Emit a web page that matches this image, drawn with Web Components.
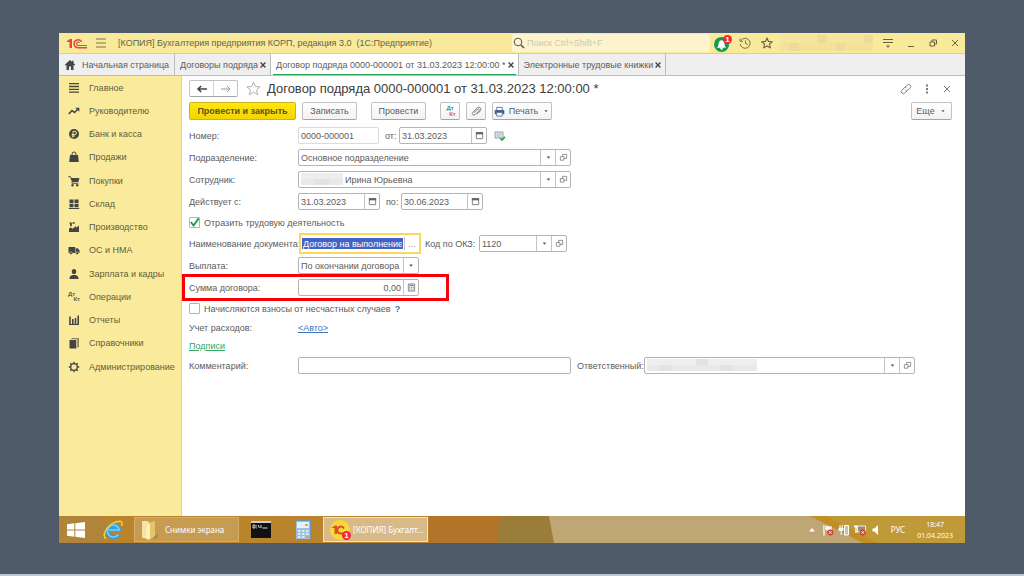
<!DOCTYPE html>
<html lang="ru">
<head>
<meta charset="utf-8">
<meta name="viewport" content="width=device-width, initial-scale=1">
<title>Договор подряда</title>
<style>
  body { margin: 0; background: #505b69; font: 9px/12px "Liberation Sans", Arial, sans-serif; color: #5c5c5c; }
</style>
</head>
<body>
<app-desktop></app-desktop>

<script>
const ICONS = {
  logo: ['0 0 40 22', '<path d="M0 6l6-4h4v18H5V8H0z" fill="#dd4a3e"/><g fill="none" stroke="#dd4a3e"><path d="M29.500 8a8 8 0 1 0-7 11.500H40" stroke-width="3"/><path d="M25.500 9.500a3.500 3.500 0 1 0-3 5.500H40" stroke-width="2.200"/></g>'],
  burger: ['0 0 12 12', '<path d="M1 2h10M1 6h10M1 10h10" stroke="#7b7347" fill="none"/>'],
  search: ['0 0 12 12', '<circle cx="5" cy="5" r="3.800" fill="none" stroke="#555"/><path d="M8 8l3 3" stroke="#555" stroke-width="1.600"/>'],
  bell: ['0 0 18 18', '<circle cx="8" cy="10" r="8" fill="#159a51"/><path d="M3 13.500c2-1.500 1.500-3 2-5 .3-1.600 1.400-3 3-3s2.700 1.400 3 3c.5 2 0 3.500 2 5z" fill="#fff"/><circle cx="8" cy="14.300" r="1.300" fill="#fff"/>'],
  history: ['0 0 12 12', '<path d="M2 3.500a5 5 0 1 1-.8 3.500M1 1.500v2.800h3M6.500 3.500v3l2.500 1" fill="none" stroke="#7b7347"/>'],
  star: ['0 0 16 16', '<path d="M8 1.300l2 4.600 5 .4-3.800 3.300 1.200 4.900L8 11.900l-4.400 2.600 1.200-4.900L1 6.300l5-.4z" fill="none" stroke="currentColor" stroke-width="var(--stroke,1)" stroke-linejoin="round"/>'],
  view: ['0 0 12 12', '<path d="M1 2.500h10M1 5.500h10" stroke="#6b6338"/><path d="M4 8.500h4L6 10.800z" fill="#6b6338"/>'],
  minimize: ['0 0 10 10', '<path d="M2 8.500h6" stroke="#6b6338"/>'],
  restore: ['0 0 10 10', '<path d="M2 4h4.500v4H2zM4 4V2h4.500v4h-2" fill="none" stroke="#6b6338"/>'],
  close: ['0 0 10 10', '<path d="M2 2l6 6M8 2l-6 6" stroke="currentColor" stroke-width="var(--stroke,1)"/>'],
  home: ['0 0 12 12', '<path d="M6 1L0.800 5.700l.8.800L2.500 6v5H5V7.500h2V11h2.500V6l.9.500.8-.8L9.500 4V1.800H8v1z" fill="#444"/>'],
  main: ['0 0 12 12', '<path d="M1 1.700h10M1 4.500h10M1 7.300h10M1 10.200h10" stroke="#4c4836" stroke-width="1.300"/>'],
  trend: ['0 0 12 12', '<path d="M.8 9L4 5.500l2.500 2L10 4" fill="none" stroke="#444" stroke-width="1.600"/><path d="M7.300 2.800h4v4z" fill="#444"/>'],
  ruble: ['0 0 12 12', '<circle cx="6" cy="6" r="5" fill="#444"/><path d="M5 9.500V3.300h1.800a1.600 1.600 0 0 1 0 3.300H3.700M3.700 8h3" fill="none" stroke="#f9eb9a"/>'],
  bag: ['0 0 12 12', '<path d="M2 4h8l.8 7H1.200z" fill="#444"/><path d="M4 5.500V3a2 2 0 0 1 4 0v2.500" fill="none" stroke="#444"/>'],
  cart: ['0 0 12 12', '<path d="M.3 1.700h2.200l.6 1.500" fill="none" stroke="#444"/><path d="M2.500 3h9L10.300 7.300H4z" fill="#444"/><path d="M3.800 7l.5 1.600h6" fill="none" stroke="#444" stroke-width=".8"/><circle cx="4.500" cy="10.200" r="1.200" fill="#444"/><circle cx="9.200" cy="10.200" r="1.200" fill="#444"/>'],
  boxes: ['0 0 12 12', '<path d="M1.500 1.500h4v3.500h-4zM6.500 1.500h4v3.500h-4zM1.500 5.800h4v3.400h-4zM6.500 5.800h4v3.400h-4zM.8 10h10.400v1H.8z" fill="#444"/>'],
  factory: ['0 0 12 12', '<path d="M1 11V7.500l2-1 1.500 1.200L8 5v1.800L11 4.500V11zM1.500 1.500h2.300v3.700H2.300zM4.500 1.200h2.200v1.600H4.500z" fill="#444"/>'],
  truck: ['0 0 12 12', '<path d="M.5 3h6.700v6H.5zM7.700 4.300h2l1.800 2V9H7.700z" fill="#444"/><circle cx="3" cy="9.200" r="1.400" fill="#444" stroke="#f9eb9a" stroke-width=".5"/><circle cx="9.200" cy="9.200" r="1.400" fill="#444" stroke="#f9eb9a" stroke-width=".5"/>'],
  person: ['0 0 12 12', '<ellipse cx="6" cy="3.600" rx="2.200" ry="2.700" fill="#444"/><path d="M1.500 11c0-3 1.500-3.500 3-4h3c1.500.5 3 1 3 4z" fill="#444"/>'],
  chart: ['0 0 12 12', '<path d="M2 2.500v7.500M4.800 5v5M7.500 4v6M10.200 1.500V10" stroke="#444" stroke-width="1.600"/><path d="M1 10.500h10" stroke="#444"/>'],
  books: ['0 0 12 12', '<path d="M1.500 3h6.800v8.500H1.500z" fill="#444"/><path d="M2.500 2.300L4 1h7v8.800L9.300 11V2.300z" fill="#8b835a"/>'],
  gear: ['0 0 12 12', '<circle cx="6" cy="6" r="3.300" fill="none" stroke="#444" stroke-width="1.300"/><path d="M6 .8v2M6 9.200v2M.8 6h2M9.200 6h2M2.300 2.300l1.400 1.400M8.300 8.300l1.400 1.400M9.700 2.300L8.300 3.700M3.700 8.300L2.300 9.700" stroke="#444" stroke-width="1.300"/>'],
  back: ['0 0 12 12', '<path d="M11 6H2M5.200 3L2 6l3.200 3" fill="none" stroke="#444" stroke-width="1.600"/>'],
  forward: ['0 0 12 12', '<path d="M1 6h9M7 3l3 3-3 3" fill="none" stroke="#999"/>'],
  clip: ['0 0 12 12', '<path d="M3.200 7.500l4-4a1 1 0 0 1 1.600 1.600L4.500 9.400a1.700 1.700 0 0 1-2.600-2.500L6.800 2a2.300 2.300 0 0 1 3.400 3.300L6.500 9" fill="none" stroke="#777"/>'],
  printer: ['0 0 12 12', '<path d="M3 1.500h6V5H3z" fill="#fff" stroke="#5a7394"/><path d="M.8 4.500h10.400V9H.8z" fill="#3d5f8c"/><path d="M3 7h6v4H3z" fill="#fff" stroke="#5a7394"/>'],
  link: ['0 0 12 12', '<g fill="none" stroke="#888"><path d="M5 4.200L7.200 2a2 2 0 0 1 2.900 2.900L8 7a2 2 0 0 1-2.500.2"/><path d="M7 7.800L4.800 10a2 2 0 0 1-2.900-2.900L4 5a2 2 0 0 1 2.500-.2"/></g>'],
  dots: ['0 0 10 10', '<path d="M4 .5h2v2H4zM4 4h2v2H4zM4 7.500h2v2H4z" fill="#777"/>'],
  calendar: ['0 0 10 10', '<path d="M1.500 2h7v6.500h-7z" fill="#fff" stroke="#777"/><path d="M1 1.200h8v2.500H1z" fill="#666"/>'],
  calc: ['0 0 10 10', '<path d="M1.500 1h7v8h-7z" fill="#eee" stroke="#888"/><path d="M2.500 2h5v1.500h-5z" fill="#888"/><path d="M3 4.500v4M5 4.500v4M7 4.500v4" stroke="#888" stroke-dasharray="1 .7"/>'],
  arrow: ['0 0 10 10', '<path d="M3 4h4L5 6.500z" fill="#555"/>'],
  open: ['0 0 10 10', '<path d="M1.500 4h4v4h-4zM4 4V1.500h4.500V6h-3" fill="none" stroke="#888"/>'],
  posted: ['0 0 12 12', '<path d="M1 2h8v6H1z" fill="#e7ecf2" stroke="#93a0b2"/><path d="M2.500 4h5M2.500 6h5" stroke="#93a0b2" stroke-width=".7"/><path d="M6 8l2 2 3-3.200" fill="none" stroke="#2fa54f" stroke-width="1.700"/>'],
  check: ['0 0 12 12', '<path d="M2 5.500l3 3.800L10.500 1.500" fill="none" stroke="#179b4a" stroke-width="2"/>'],
  windows: ['0 0 18 16', '<path d="M0 2.300l7.300-1v6.200H0zM8.300 1.200L18 0v7.500H8.300zM0 8.500h7.300v6.200l-7.300-1zM8.300 8.500H18V16l-9.700-1.200z" fill="#fff"/>'],
  ie: ['0 0 20 20', '<path d="M15.300 14.500a6 6 0 1 1 1-4.500H6" fill="none" stroke="#2f9fe6" stroke-width="4"/><path d="M15.300 14.500a6 6 0 1 1 1-4.500H6" fill="none" stroke="#7fd0fb" stroke-width="1.500"/><path d="M3 18.500C-2 16 4 5 13 2c6-2 7 0 5.500 4" fill="none" stroke="#f2cf3c" stroke-width="1.500"/>'],
  folder: ['0 0 18 20', '<path d="M1 1h6l2 3v14H1z" fill="#f7e3a0"/><path d="M6 3l8-2v15l-6 4-4-1z" fill="#e5c56c"/><path d="M6 3l3 1v15.500L4 18z" fill="#fff0bd"/><path d="M12 18l5-4v3l-3 2z" fill="#a98342"/>'],
  terminal: ['0 0 20 17', '<path d="M0 0h20v17H0z" fill="#111"/><path d="M0 0h20v2H0z" fill="#cfcfcf"/><path d="M2 4v3h2V4zM5.500 4.500v.8M5.500 6.500v.8M7 4l1.500 3M10 4v3M11.500 7h5" stroke="#eee" fill="none" stroke-width=".9"/>'],
  calculator: ['0 0 16 20', '<path d="M.5.500h15v19H.5z" fill="#9dc0dd" stroke="#6d92b3"/><path d="M2 2h12v6H2z" fill="#e5f3f8"/><path d="M3 11h2.500M3 14h2.500M3 17h2.500M7 11h2.500M7 14h2.500M7 17h2.500M11 11h2.500M11 14h2.500" stroke="#d9ebf6" stroke-width="1.800"/><path d="M11 16h2.500v2H11z" fill="#e8a33a"/><path d="M10 4h3v2h-3z" fill="#dfa949"/>'],
  onec: ['0 0 20 20', '<circle cx="10" cy="10" r="10" fill="#fbd935"/><path d="M2 7.500L5 5.500h2V14H4.500V8H2z" fill="#d9502f"/><path d="M14 8.500a3.500 3.500 0 1 0-2.500 5H18" fill="none" stroke="#d9502f" stroke-width="2"/>'],
  trayup: ['0 0 12 12', '<path d="M3 7.500h6L6 4z" fill="#fff"/>'],
  flag: ['0 0 12 12', '<path d="M2 1v10.500" stroke="#fff" stroke-width="1.300"/><path d="M3 1.500c3-1 4 1.500 7 .3V7c-3 1-4-.8-7 0z" fill="#f3f3f3" stroke="#8a7a55" stroke-width=".4"/><circle cx="8.300" cy="8.500" r="3" fill="#d43a31"/><path d="M7 7.200l2.600 2.600M9.600 7.200L7 9.800" stroke="#fff"/>'],
  battery: ['0 0 12 12', '<path d="M6.500 1.500h4V11h-4z" fill="#c9c2b3" stroke="#fff"/><path d="M2 1v2.500M4.300 1v2.500M1 4h4v2.500H1zM3.200 7v4" stroke="#fff" fill="#eee"/>'],
  network: ['0 0 12 12', '<path d="M3.500 2h8v6h-8z" fill="#8f8f7b" stroke="#eee"/><path d="M2 1v8M0 2.500h4" stroke="#fff" stroke-width="1.300"/><circle cx="8.800" cy="8.500" r="3" fill="#d43a31"/><path d="M7.500 7.200l2.600 2.600M10.100 7.200L7.500 9.800" stroke="#fff"/>'],
  sound: ['0 0 12 12', '<path d="M2.500 4.500h2L8 1v10L4.500 7.500h-2z" fill="#fff"/>']
};

class Base extends HTMLElement {
  connectedCallback() {
    if (this.shadowRoot) return;
    this.attachShadow({ mode: 'open' }).innerHTML =
      '<style>*{box-sizing:border-box}button,input,select{font:inherit;color:inherit;margin:0;padding:0;border:0;background:none;border-radius:0}' +
      this.css() + '</style>' + this.html();
  }
  attr(name, fallback = '') { return this.getAttribute(name) ?? fallback; }
}

customElements.define('ui-icon', class extends Base {
  css() { return ':host{display:block;flex:none;width:12px;height:12px}svg{display:block;width:100%;height:100%}'; }
  html() {
    const [box, body] = ICONS[this.attr('name')];
    return `<svg viewBox="${box}" aria-hidden="true">${body}</svg>`;
  }
});

customElements.define('count-badge', class extends Base {
  css() { return ':host{display:block;width:9px;height:9px;border-radius:50%;background:#ee2b37;color:#fff;font:bold 8px/9px "Liberation Sans",Arial,sans-serif;text-align:center}'; }
  html() { return '<slot></slot>'; }
});

/* Pixelated patch that hides a personal name. */
customElements.define('masked-text', class extends Base {
  css() {
    return `:host{display:grid;grid-auto-flow:column;grid-auto-columns:1fr;grid-template-rows:repeat(2,1fr);flex:none;width:110px;height:12px}
      i:nth-child(odd){background:var(--mask-a,#e9e9e9)}i:nth-child(even){background:var(--mask-b,#eeeeee)}i:nth-child(5n){background:var(--mask-c,#e2e3e3)}`;
  }
  html() { return '<i></i>'.repeat(Number(this.attr('cells', '18'))); }
});

customElements.define('title-bar', class extends Base {
  css() {
    return `:host{display:flex;align-items:center;height:21px;background:#f9e99b;border-bottom:1px solid #d8cf9f;color:#6a6344}
      .left,.right{display:flex;align-items:center;flex:1;min-width:0}
      .left{gap:8px}.logo{width:20px;height:11px;margin-left:8px}
      .title{margin-left:3px;white-space:pre}
      button{display:block}
      label{display:flex;align-items:center;flex:1;gap:2px;height:18px;background:#fdf3cd;border-radius:2px;padding-left:1px}
      input{flex:1;min-width:0;outline:0}input::placeholder{color:#d0c9aa;opacity:1}
      .bell{position:relative;margin:0 8px 0 4px}.bell ui-icon{width:17px;height:17px}.bell count-badge{position:absolute;right:-1px;top:0}
      .tools{display:flex;align-items:center;gap:10px}
      masked-text{width:93px;height:16px;margin:0 9px 0 7px;--mask-a:#f3e29a;--mask-b:#f6e59c;--mask-c:#ecdc98}
      .window{display:flex;gap:12px;padding-right:5px}.window ui-icon{width:10px;height:10px}
      .window .view ui-icon{width:12px;height:12px}`;
  }
  html() {
    return `<div class="left"><ui-icon class="logo" name="logo"></ui-icon>
      <button aria-label="Меню"><ui-icon name="burger"></ui-icon></button>
      <span class="title">[КОПИЯ] Бухгалтерия предприятия КОРП, редакция 3.0  (1С:Предприятие)</span></div>
      <div class="right"><label><ui-icon name="search"></ui-icon><input type="search" aria-label="Поиск" placeholder="Поиск Ctrl+Shift+F"></label>
      <button class="bell" aria-label="Уведомления"><ui-icon name="bell"></ui-icon><count-badge>1</count-badge></button>
      <div class="tools"><button aria-label="История"><ui-icon name="history"></ui-icon></button><button aria-label="Избранное"><ui-icon name="star" style="--stroke:1.500"></ui-icon></button></div>
      <masked-text cells="20"></masked-text>
      <div class="window"><button class="view" aria-label="Вид"><ui-icon name="view"></ui-icon></button><button aria-label="Свернуть"><ui-icon name="minimize"></ui-icon></button><button aria-label="Восстановить"><ui-icon name="restore"></ui-icon></button><button aria-label="Закрыть"><ui-icon name="close"></ui-icon></button></div></div>`;
  }
});

customElements.define('doc-tab', class extends Base {
  css() {
    return `:host{display:flex;align-items:center;gap:1px;padding:0 3px 0 5px;border-right:1px solid #bdbdbd;height:21px;white-space:nowrap}
      :host([home]){padding:0 5px;gap:6px}
      :host([active]){background:linear-gradient(#26a658,#26a658) 2px 100%/calc(100% - 4px) 1px no-repeat #fff}
      button{display:block;color:#444;--stroke:1.700}button ui-icon{width:8px;height:8px}a{color:inherit;text-decoration:none}`;
  }
  html() {
    return this.hasAttribute('home')
      ? '<ui-icon name="home"></ui-icon><a href="#"><slot></slot></a>'
      : '<a href="#"><slot></slot></a><button aria-label="Закрыть вкладку"><ui-icon name="close"></ui-icon></button>';
  }
});

customElements.define('tab-strip', class extends Base {
  css() { return ':host{display:flex;height:22px;background:#efefef;border-bottom:1px solid #bdbdbd;overflow:hidden}'; }
  html() { return '<slot></slot>'; }
});

customElements.define('side-nav', class extends Base {
  css() {
    return `:host{display:block;width:123px;flex:none;background:#f9eb9b;border-right:1px solid #ddd197}
      ul{list-style:none;margin:0;padding:0;height:302px;display:flex;flex-direction:column;justify-content:space-between}
      a{display:flex;align-items:center;gap:9px;height:23px;padding-left:9px;color:#635d3c;text-decoration:none}
      .dk{display:flex;flex-direction:column;width:12px;font-size:6px;line-height:5px;font-weight:bold}.dk i{font-style:normal}.dk i+i{align-self:flex-end}`;
  }
  html() {
    const items = [['main','Главное'],['trend','Руководителю'],['ruble','Банк и касса'],['bag','Продажи'],['cart','Покупки'],['boxes','Склад'],['factory','Производство'],['truck','ОС и НМА'],['person','Зарплата и кадры'],['dk','Операции'],['chart','Отчеты'],['books','Справочники'],['gear','Администрирование']];
    return '<nav><ul>' + items.map(([i, t]) => `<li><a href="#">${i === 'dk' ? '<span class="dk" aria-hidden="true"><i>Дт</i><i>Кт</i></span>' : `<ui-icon name="${i}"></ui-icon>`}${t}</a></li>`).join('') + '</ul></nav>';
  }
});

customElements.define('tool-button', class extends Base {
  css() {
    return `:host{display:block;flex:none}
      button{display:flex;align-items:center;justify-content:center;gap:4px;width:100%;height:18px;padding:0 4px;border:1px solid #c2c2c2;border-bottom-color:#a5a5a5;border-radius:2px;background:linear-gradient(#fff,#f2f2f2);white-space:nowrap}
      :host([primary]) button{background:linear-gradient(#ffe70f,#f5d400);border-color:#cdb21c;font-weight:bold;color:#5c541c}`;
  }
  html() { return `<button type="button" aria-label="${this.attr('hint', this.textContent.trim())}"><slot></slot></button>`; }
});

/* Labelled box: kind = text | date | combo | list | sum | name */
customElements.define('form-field', class extends Base {
  css() {
    return `:host{display:flex;align-items:center;flex:none}
      label{flex:none;width:var(--label,109px);white-space:nowrap}
      .box{display:flex;align-items:stretch;height:17px;width:var(--box,273px);border:1px solid #b4b4b4;border-radius:2px;background:#fff}
      .box>input,.box>select{flex:1;min-width:0;width:0;padding:0 2px;outline:0;appearance:none}
      .box>button{display:flex;align-items:center;justify-content:center;width:15px;border-left:1px solid #c4c4c4}
      .box ui-icon{width:9px;height:9px}
      .box>ui-icon{width:14px;height:9px;align-self:center}
      .split{width:1px;background:#c4c4c4}
      masked-text{margin:1px 0 0 2px;height:12px;width:var(--mask,42px)}
      masked-text+input{padding-left:0}
      :host([readonly]) .box{border-color:#dcdcdc}
      :host([kind=sum]) input{text-align:right}
      :host([kind=name]) .box{border:0;border-radius:0;outline:2px solid #fbd75b}
      :host([kind=name]) .box>button{color:#999;margin:2px 0}
      :host([kind=name]) input{background:#4462c4;color:#fff;margin:3px 1px 3px 1px;padding:0 1px}`;
  }
  html() {
    const kind = this.attr('kind', 'text'), value = this.attr('value'), mask = this.attr('mask');
    const btn = (icon, hint) => `<button type="button" aria-label="${hint}"><ui-icon name="${icon}"></ui-icon></button>`;
    const tail = {
      text: '', date: btn('calendar', 'Календарь'), sum: btn('calc', 'Калькулятор'),
      combo: btn('arrow', 'Список') + btn('open', 'Открыть'),
      list: '<span class="split"></span><ui-icon name="arrow"></ui-icon>',
      name: '<button type="button" aria-label="Выбрать">...</button>'
    }[kind];
    const control = kind === 'list' ? `<select id="f"><option>${value}</option></select>`
      : `<input id="f" value="${value}"${this.hasAttribute('readonly') ? ' readonly' : ''}>`;
    return `<label for="f">${this.attr('label')}</label><div class="box">${mask ? `<masked-text cells="${mask}"></masked-text>` : ''}${control}${tail}</div>`;
  }
});

customElements.define('check-field', class extends Base {
  css() {
    return `:host{display:flex;align-items:center;height:15px}
      label{display:flex;align-items:center;gap:4px}
      .tick{display:grid;width:11px;height:11px}
      .tick>*{grid-area:1/1}
      input{appearance:none;width:11px;height:11px;border:1px solid #b4b4b4;border-radius:1px;background:#fff}
      ui-icon{width:11px;height:11px;visibility:hidden;pointer-events:none}
      input:checked+ui-icon{visibility:visible}`;
  }
  html() { return `<label><span class="tick"><input type="checkbox"${this.hasAttribute('checked') ? ' checked' : ''}><ui-icon name="check"></ui-icon></span><slot></slot></label><slot name="after"></slot>`; }
});

customElements.define('contract-form', class extends Base {
  css() {
    return `:host{display:block;flex:1;min-width:0;background:#fff;padding:4px 13px 0 7px}
      .head{display:flex;align-items:center;height:17px}
      .nav{display:flex;width:49px;height:17px;border:1px solid #c2c2c2;border-bottom-color:#a5a5a5;border-radius:2px}
      .nav button{flex:1;display:flex;align-items:center;justify-content:center}.nav button+button{border-left:1px solid #d2d2d2}
      .fav{margin:0 6px 0 8px;color:#aaa}.fav ui-icon{width:15px;height:15px}
      h1{flex:1;margin:0;font:13px/17px "Liberation Sans",Arial,sans-serif;color:#3c3c3c;white-space:nowrap}
      .head .actions{display:flex;align-items:center;gap:10px;color:#777}.actions ui-icon{width:10px;height:10px}.actions .link ui-icon{width:12px;height:12px}
      .bar{display:flex;gap:6px;margin:5px 0 7px}
      .gap{margin:0 8px}
      .more{margin-left:auto;width:41px}
      .small{width:20px}
      tool-button ui-icon{width:11px;height:11px}tool-button .drop{width:8px;height:8px}
      .dk{display:flex;flex-direction:column;font:bold 6px/6px "Liberation Sans",Arial,sans-serif;color:#3c9b5f}.dk i{font-style:normal}.dk i+i{color:#dd5b50;margin-left:5px}
      form{display:flex;flex-direction:column;gap:5px}
      .row{display:flex;align-items:center;gap:6px;min-height:13px;white-space:nowrap}
      .posted{margin-left:1px}
      .key{width:103px}.mark{position:relative}
      .mark::after{content:"";position:absolute;left:-7px;top:-5px;width:267px;height:27px;box-sizing:border-box;border:3px solid #f90007;pointer-events:none}
      a{color:#3f75b8}a.green{color:#35a468}a.help{color:#3f75b8;font-weight:bold;text-decoration:none;margin-left:4px}`;
  }
  html() {
    return `<div class="head"><div class="nav"><button aria-label="Назад"><ui-icon name="back"></ui-icon></button><button aria-label="Вперед"><ui-icon name="forward"></ui-icon></button></div>
      <button class="fav" aria-label="В избранное"><ui-icon name="star"></ui-icon></button>
      <h1>Договор подряда 0000-000001 от 31.03.2023 12:00:00 *</h1>
      <div class="actions"><button class="link" aria-label="Ссылка"><ui-icon name="link"></ui-icon></button><button aria-label="Еще"><ui-icon name="dots"></ui-icon></button><button aria-label="Закрыть"><ui-icon name="close"></ui-icon></button></div></div>
    <div class="bar">
      <tool-button primary style="width:107px">Провести и закрыть</tool-button>
      <tool-button style="width:55px">Записать</tool-button>
      <tool-button class="gap" style="width:55px">Провести</tool-button>
      <tool-button class="small" hint="Проводки"><span class="dk"><i>Дт</i><i>Кт</i></span></tool-button>
      <tool-button class="small" hint="Файлы"><ui-icon name="clip"></ui-icon></tool-button>
      <tool-button style="width:60px"><ui-icon name="printer"></ui-icon>Печать<ui-icon class="drop" name="arrow"></ui-icon></tool-button>
      <tool-button class="more">Еще<ui-icon class="drop" name="arrow"></ui-icon></tool-button>
    </div>
    <form>
      <div class="row"><form-field readonly label="Номер:" value="0000-000001" style="--box:81px"></form-field><form-field kind="date" label="от:" value="31.03.2023" style="--label:14px;--box:88px"></form-field><ui-icon class="posted" name="posted"></ui-icon></div>
      <div class="row"><form-field kind="combo" label="Подразделение:" value="Основное подразделение"></form-field></div>
      <div class="row"><form-field kind="combo" label="Сотрудник:" mask="6" value="Ирина Юрьевна"></form-field></div>
      <div class="row"><form-field kind="date" label="Действует с:" value="31.03.2023" style="--box:82px"></form-field><form-field kind="date" label="по:" value="30.06.2023" style="--label:15px;--box:82px"></form-field></div>
      <check-field checked>Отразить трудовую деятельность</check-field>
      <div class="row"><form-field kind="name" label="Наименование документа:" value="Договор на выполнение ф" style="--label:112px;--box:118px"></form-field><form-field kind="combo" label="Код по ОКЗ:" value="1120" style="--label:54px;--box:88px"></form-field></div>
      <div class="row"><form-field kind="list" label="Выплата:" value="По окончании договора" style="--box:121px"></form-field></div>
      <div class="row mark"><form-field kind="sum" label="Сумма договора:" value="0,00" style="--box:121px"></form-field></div>
      <check-field>Начисляются взносы от несчастных случаев<a class="help" slot="after" href="#">?</a></check-field>
      <div class="row"><span class="key">Учет расходов:</span><a href="#">&lt;Авто&gt;</a></div>
      <div class="row"><a class="green" href="#">Подписи</a></div>
      <div class="row"><form-field label="Комментарий:"></form-field><form-field kind="combo" label="Ответственный:" mask="18" style="--label:67px;--box:271px;--mask:110px"></form-field></div>
    </form>`;
  }
});

customElements.define('task-bar', class extends Base {
  css() {
    return `:host{display:flex;align-items:center;position:relative;height:27px;color:#fff;font:8px/11px "Noto Sans","Open Sans",sans-serif;background:#b8832b;overflow:hidden}
      .paint{position:absolute;inset:0;width:100%;height:100%}
      :host>button,.tray{position:relative}
      button{display:flex;align-items:center;justify-content:center;height:25px;white-space:nowrap}
      .start{width:33px}.start ui-icon{width:18px;height:16px}
      .ie{width:42px}.ie ui-icon{width:20px;height:20px}
      .task{gap:6px;justify-content:flex-start;padding:0 6px;width:105px;border:1px solid #d3ad6b;background:#ffffff30}
      .task.active{background:#ffffff70;border-color:#f0e3c8;gap:3px}
      .task ui-icon{width:18px;height:20px}.task.active ui-icon{width:20px}
      .console{width:43px}.console ui-icon{width:20px;height:17px}
      .calc{width:41px}.calc ui-icon{width:16px;height:20px}
      .onec{position:relative}.onec count-badge{position:absolute;right:-1px;bottom:0}
      .tray{margin-left:auto;display:flex;align-items:center;gap:4px;padding-right:12px}
      .lang{margin:0 8px 0 5px}time{text-align:center;font-size:7px}`;
  }
  html() {
    return `<svg class="paint" viewBox="0 0 906 27" preserveAspectRatio="none" aria-hidden="true"><path d="M0 0h370v27H0z" fill="#b9842b"/><path d="M0 0h45q6 12-3 27H0z" fill="#b0843b"/><path d="M370 0h72q-4 14-3 27h-69z" fill="#b3752a"/><path d="M442 0h48l5 27h-56q-1-14 3-27z" fill="#9b7d3a"/><path d="M490 0h416v27H495z" fill="#bfa675"/><path d="M751 0h155v27H804z" fill="#c18f25"/><path d="M768 0h138v27h-88z" fill="#c09a38"/></svg>
      <button class="start" aria-label="Пуск"><ui-icon name="windows"></ui-icon></button>
      <button class="ie" aria-label="Internet Explorer"><ui-icon name="ie"></ui-icon></button>
      <button class="task"><ui-icon name="folder"></ui-icon>Снимки экрана</button>
      <button class="console" aria-label="Командная строка"><ui-icon name="terminal"></ui-icon></button>
      <button class="calc" aria-label="Калькулятор"><ui-icon name="calculator"></ui-icon></button>
      <button class="task active"><span class="onec"><ui-icon name="onec"></ui-icon><count-badge>1</count-badge></span>[КОПИЯ] Бухгалт...</button>
      <div class="tray"><ui-icon name="trayup"></ui-icon><ui-icon name="flag"></ui-icon><ui-icon name="battery"></ui-icon><ui-icon name="network"></ui-icon><ui-icon name="sound"></ui-icon><span class="lang">РУС</span><time>18:47<br>01.04.2023</time></div>`;
  }
});

customElements.define('app-desktop', class extends Base {
  css() {
    return `:host{display:flex;box-sizing:border-box;min-height:100vh;padding:33px 59px 31px;border-bottom:2px solid #bcc7d6}
      main{flex:1;min-width:0;display:flex;flex-direction:column;background:#fff}
      .body{flex:1;display:flex;min-height:0}`;
  }
  html() {
    return `<main><title-bar></title-bar>
      <tab-strip><doc-tab home>Начальная страница</doc-tab><doc-tab>Договоры подряда</doc-tab><doc-tab active>Договор подряда 0000-000001 от 31.03.2023 12:00:00 *</doc-tab><doc-tab>Электронные трудовые книжки</doc-tab></tab-strip>
      <div class="body"><side-nav></side-nav><contract-form></contract-form></div>
      <task-bar></task-bar></main>`;
  }
});
</script>
</body>
</html>
